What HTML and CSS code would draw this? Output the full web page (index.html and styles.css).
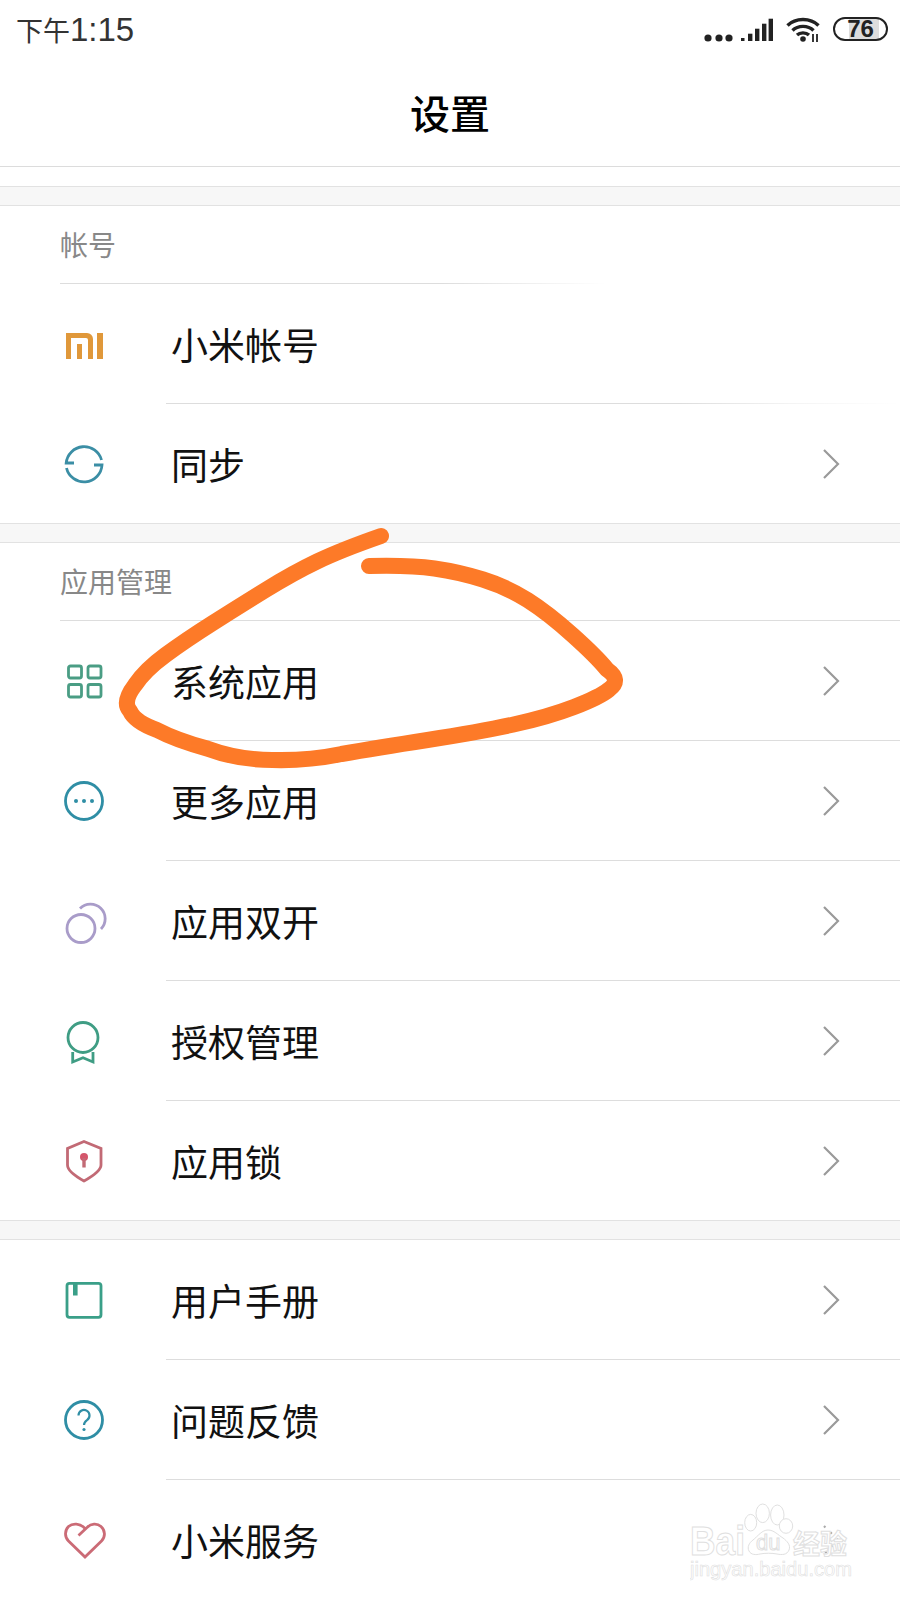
FILE: index.html
```html
<!DOCTYPE html>
<html lang="zh-CN">
<head>
<meta charset="UTF-8">
<meta name="viewport" content="width=device-width, initial-scale=1.0">
<title>设置</title>
<link rel="stylesheet" href="styles.css">
</head>
<body>

<div class="status-bar">
    <span class="time">下午<span class="time-num">1:15</span></span>
    <div class="status-icons">
        <svg class="dots" width="32" height="10" viewBox="0 0 32 10"><circle cx="4" cy="5" r="3.6"/><circle cx="15" cy="5" r="3.6"/><circle cx="25" cy="5" r="3.6"/></svg>
        <svg class="signal" width="32" height="24" viewBox="0 0 32 24"><rect x="0" y="21" width="3.5" height="3"/><rect x="7" y="16.7" width="4.4" height="7.3"/><rect x="14" y="11.7" width="4.4" height="12.3"/><rect x="21" y="6.7" width="4.4" height="17.3"/><rect x="27.6" y="1.7" width="4.4" height="22.3"/></svg>
        <svg class="wifi" width="34" height="26" viewBox="0 0 34 26"><path d="M1.5 8.5C9.5 .5 24.5 .5 32.5 8.5M6.5 13.5C12 8 22 8 27.5 13.5M11 18C14 15.2 20 15.2 23 18"/><circle class="fill" cx="17" cy="22" r="2.8"/><path class="thin" d="M27 17v8M31 17v8"/></svg>
        <div class="battery"><span>76</span></div>
    </div>
</div>

<h1 class="title">设置</h1>

<div class="gap"></div>
<div class="band"></div>

<div class="section">
    <div class="section-label fade-line">帐号</div>
    <div class="row">
        <div class="row-icon">
            <svg width="48" height="48" viewBox="0 0 48 48"><path fill="#e0983a" d="M6 13H27a6 6 0 0 1 6 6V39H28V20a2 2 0 0 0-2-2H11V39H6ZM17 24h5V39H17ZM37 13h6V39H37Z"/></svg>
        </div>
        <div class="row-body fade-line-long"><span class="row-text">小米帐号</span></div>
    </div>
    <div class="row end">
        <div class="row-icon">
            <svg class="line-icon" stroke="#3b8ea5" width="48" height="48" viewBox="0 0 48 48"><path d="M14 23H6.2A18 18 0 0 1 41.5 20M34 25H42A18 18 0 0 1 6.5 28"/></svg>
        </div>
        <div class="row-body">
            <span class="row-text">同步</span>
            <svg class="chevron" width="20" height="32" viewBox="0 0 20 32"><path d="M3 2L17 16L3 30"/></svg>
        </div>
    </div>
</div>

<div class="band"></div>

<div class="section">
    <div class="section-label">应用管理</div>
    <div class="row">
        <div class="row-icon">
            <svg class="line-icon" stroke="#4a9d84" width="48" height="48" viewBox="0 0 48 48"><rect x="8.5" y="9" width="13" height="12" rx="2"/><rect x="28" y="9" width="13" height="12" rx="2"/><rect x="8.5" y="27.5" width="13" height="12.5" rx="2"/><rect x="28" y="27.5" width="13" height="12.5" rx="2"/></svg>
        </div>
        <div class="row-body">
            <span class="row-text">系统应用</span>
            <svg class="chevron" width="20" height="32" viewBox="0 0 20 32"><path d="M3 2L17 16L3 30"/></svg>
        </div>
    </div>
    <div class="row">
        <div class="row-icon">
            <svg class="line-icon" stroke="#2f8ea5" width="48" height="48" viewBox="0 0 48 48"><circle cx="24" cy="24" r="18.5"/><circle class="dot" fill="#2f8ea5" cx="16" cy="24" r="2"/><circle class="dot" fill="#2f8ea5" cx="24" cy="24" r="2"/><circle class="dot" fill="#2f8ea5" cx="32" cy="24" r="2"/></svg>
        </div>
        <div class="row-body">
            <span class="row-text">更多应用</span>
            <svg class="chevron" width="20" height="32" viewBox="0 0 20 32"><path d="M3 2L17 16L3 30"/></svg>
        </div>
    </div>
    <div class="row">
        <div class="row-icon">
            <svg class="line-icon" stroke="#a99cc9" width="48" height="48" viewBox="0 0 48 48"><circle cx="21" cy="31.5" r="14"/><path d="M20 11.5A14.6 14.6 0 0 1 41 32"/></svg>
        </div>
        <div class="row-body">
            <span class="row-text">应用双开</span>
            <svg class="chevron" width="20" height="32" viewBox="0 0 20 32"><path d="M3 2L17 16L3 30"/></svg>
        </div>
    </div>
    <div class="row">
        <div class="row-icon">
            <svg class="line-icon" stroke="#3f9d84" width="48" height="48" viewBox="0 0 48 48"><circle cx="23" cy="20.5" r="15"/><path d="M12.7 35V45L23 40.8L33 45V35"/></svg>
        </div>
        <div class="row-body">
            <span class="row-text">授权管理</span>
            <svg class="chevron" width="20" height="32" viewBox="0 0 20 32"><path d="M3 2L17 16L3 30"/></svg>
        </div>
    </div>
    <div class="row end">
        <div class="row-icon">
            <svg class="line-icon" stroke="#c26a75" width="48" height="48" viewBox="0 0 48 48"><path d="M24 4.5L41 11.5V28C41 33 33 39 24 44C15 39 7.5 33 7.5 28V11.5Z"/><circle class="dot" fill="#d4566b" cx="24" cy="20" r="4"/><rect class="dot" fill="#c26a75" x="22.3" y="21" width="3.4" height="9.5"/></svg>
        </div>
        <div class="row-body">
            <span class="row-text">应用锁</span>
            <svg class="chevron" width="20" height="32" viewBox="0 0 20 32"><path d="M3 2L17 16L3 30"/></svg>
        </div>
    </div>
</div>

<div class="band"></div>

<div class="section">
    <div class="row">
        <div class="row-icon">
            <svg class="line-icon" stroke="#3a9f88" width="48" height="48" viewBox="0 0 48 48"><rect x="7" y="7.3" width="34" height="34" rx="2.5"/><rect class="dot" fill="#3a9f88" x="13" y="7" width="4.6" height="12.5"/></svg>
        </div>
        <div class="row-body">
            <span class="row-text">用户手册</span>
            <svg class="chevron" width="20" height="32" viewBox="0 0 20 32"><path d="M3 2L17 16L3 30"/></svg>
        </div>
    </div>
    <div class="row">
        <div class="row-icon">
            <svg class="line-icon" stroke="#2f8ea5" width="48" height="48" viewBox="0 0 48 48"><circle cx="24" cy="24" r="18.5"/><path class="q-mark" d="M18.5 19.5a5.5 5.5 0 1 1 8.5 4.6c-2 1.4-3 2.4-3 5"/><circle class="dot" fill="#2f8ea5" cx="24" cy="33.5" r="1.6"/></svg>
        </div>
        <div class="row-body">
            <span class="row-text">问题反馈</span>
            <svg class="chevron" width="20" height="32" viewBox="0 0 20 32"><path d="M3 2L17 16L3 30"/></svg>
        </div>
    </div>
    <div class="row end">
        <div class="row-icon">
            <svg class="line-icon" stroke="#cb6b76" width="48" height="48" viewBox="0 0 48 48"><path d="M18.5 19.5L27 11.5C31 7.5 37 7 41 10.5C45.5 14.5 45.5 21 41.5 25L25 41L8.5 25C4.5 21 4.5 14.5 8.5 10.5C12.5 7 20 7 25 12.5"/></svg>
        </div>
        <div class="row-body">
            <span class="row-text">小米服务</span>
            <svg class="chevron under" width="20" height="32" viewBox="0 0 20 32"><path d="M3 2L17 16L3 30"/></svg>
        </div>
    </div>
</div>

<!-- hand drawn circle round the item -->
<svg class="scribble" width="900" height="1600" viewBox="0 0 900 1600"><path d="M381 536Q341 550 317 561.5Q293 573 265.5 590Q238 607 212 623.5Q186 640 165.5 655Q145 670 135 685Q122 702 130 711Q135 722 157 730Q176 740 207 748.5Q238 760 272.5 760Q307 761 341.5 754Q376 748 427.5 740Q479 732 513.5 724.5Q548 717 574 707Q600 697 609 689.5Q622 680 607 669.5Q597 657 572.5 635Q548 613 527.5 600Q507 587 483 579.5Q459 572 434.5 568.5Q410 565 369 566"/></svg>

<!-- watermark -->
<svg class="watermark" width="180" height="90" viewBox="0 0 180 90">
    <ellipse cx="60.7" cy="19.7" rx="6" ry="8.3"/>
    <ellipse cx="72.7" cy="10.3" rx="6.7" ry="9.3"/>
    <ellipse cx="87.3" cy="12" rx="6.7" ry="10"/>
    <ellipse cx="96" cy="23" rx="6.7" ry="7.3"/>
    <path d="M78 27C72 27 68 33 63 37C59 40 57 44 59 48C61 52 66 52 70 51C75 50 82 50 87 51C92 52 97 52 99 47C101 42 97 38 93 35C88 32 84 27 78 27Z"/>
    <text class="wm-big" x="0" y="52" textLength="55" lengthAdjust="spacingAndGlyphs">Bai</text>
    <text class="wm-du" x="66" y="47">du</text>
    <text class="wm-cn" x="103" y="51">经验</text>
    <text class="wm-url" x="0" y="73" textLength="162" lengthAdjust="spacingAndGlyphs">jingyan.baidu.com</text>
</svg>

</body>
</html>
```
FILE: styles.css
```css
* {
    box-sizing: border-box;
}
body {
    position: relative;
    width: 900px;
    height: 1600px;
    margin: 0;
    overflow: hidden;
    background-color: #ffffff;
    color: #111111;
    font-family: "Noto Sans CJK SC", "Liberation Sans", sans-serif;
}
.status-bar {
    display: flex;
    justify-content: space-between;
    align-items: center;
    height: 62px;
    padding: 0 12px 0 16px;
}
.time {
    margin-bottom: 4px;
    font-size: 27px;
    color: #333333;
}
.time-num {
    font-family: "Liberation Sans Narrow", "Liberation Sans", sans-serif;
    font-size: 33px;
}
.status-icons {
    display: flex;
    align-items: center;
    gap: 13px;
    color: #222222;
}
.dots {
    margin-top: 14px;
    margin-right: -8px;
    fill: #222222;
}
.signal {
    margin-bottom: 4px;
    fill: #222222;
}
.wifi {
    margin-bottom: 2px;
    fill: none;
    stroke: #222222;
    stroke-width: 3.4;
}
.wifi .fill {
    fill: #222222;
    stroke: none;
}
.wifi .thin {
    stroke-width: 1.8;
}
.battery {
    display: flex;
    justify-content: center;
    align-items: center;
    width: 55px;
    height: 24px;
    margin-bottom: 4px;
    border: 2.5px solid #222222;
    border-radius: 12px;
    background: linear-gradient(to right, #ffffff 27%, #dddddd 27%, #dddddd 87%, #ffffff 87%);
    font-family: "Liberation Sans Narrow", "Liberation Sans", sans-serif;
    font-size: 24px;
    font-weight: bold;
}
.title {
    height: 105px;
    margin: 0;
    border-bottom: 1px solid #dcdcdc;
    text-align: center;
    font-size: 40px;
    font-weight: 500;
    line-height: 100px;
    color: #000000;
}
.gap {
    height: 19px;
}
.band {
    height: 20px;
    border-top: 1px solid #e2e2e2;
    border-bottom: 1px solid #e2e2e2;
    background-color: #f7f7f7;
}
.section-label {
    height: 78px;
    margin-left: 60px;
    border-bottom: 1px solid #dddddd;
    font-size: 28px;
    line-height: 76px;
    color: #888888;
}
.fade-line {
    width: 545px;
    border-image: linear-gradient(to right, #dddddd 70%, rgba(221, 221, 221, 0) 100%) 1;
}
.row {
    display: flex;
    height: 120px;
}
.row.end {
    height: 119px;
}
.row-icon {
    display: flex;
    align-items: center;
    width: 166px;
    padding-left: 60px;
}
.row-body {
    flex: 1;
    display: flex;
    justify-content: space-between;
    align-items: center;
    padding-right: 59px;
    border-bottom: 1px solid #dddddd;
}
.row.end .row-body {
    border-bottom: none;
}
.fade-line-long {
    border-image: linear-gradient(to right, #dddddd 70%, #f4f4f4 85%, #ffffff 100%) 1;
}
.row-text {
    padding-left: 5px;
    font-size: 37px;
    color: #111111;
}
.chevron {
    fill: none;
    stroke: #9a9a9a;
    stroke-width: 2.2;
}
.chevron.under {
    stroke: #aaaaaa;
    stroke-dasharray: 2 7;
}
.line-icon {
    fill: none;
    stroke-width: 2.8;
}
.line-icon .dot {
    stroke: none;
}
.line-icon .q-mark {
    stroke-width: 2.2;
}
.scribble {
    position: absolute;
    top: 0;
    left: 0;
    fill: none;
    stroke: #fd7a28;
    stroke-width: 16;
    stroke-linecap: round;
    stroke-linejoin: round;
}
.watermark {
    position: absolute;
    top: 1503px;
    left: 690px;
    fill: #ffffff;
    stroke: #e0e0e0;
    stroke-width: 1;
}
.wm-big {
    font-family: "Liberation Sans", sans-serif;
    font-size: 41px;
    font-weight: bold;
}
.wm-du {
    font-family: "Liberation Sans", sans-serif;
    font-size: 22px;
}
.wm-cn {
    font-size: 27px;
    font-weight: bold;
}
.wm-url {
    font-family: "Liberation Sans", sans-serif;
    font-size: 20px;
    stroke-width: .6;
}
```
